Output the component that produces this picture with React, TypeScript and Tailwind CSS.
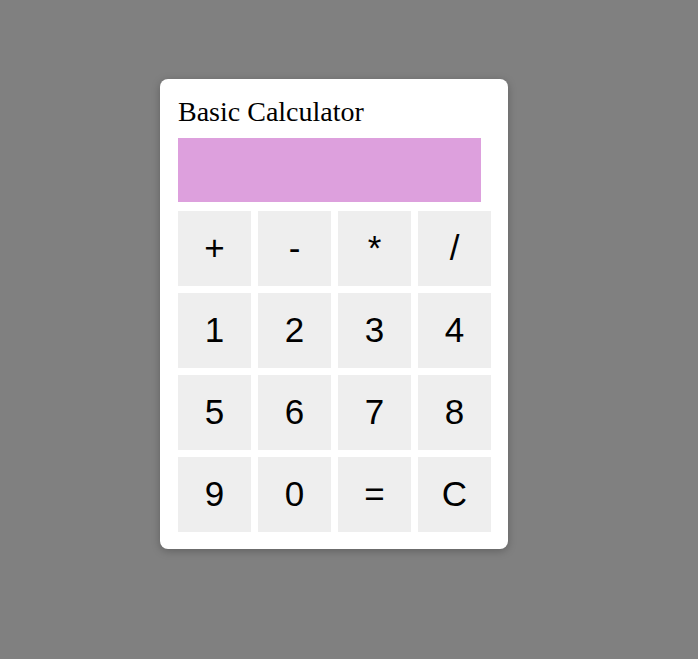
import React from "react";

const keys = ["+", "-", "*", "/", "1", "2", "3", "4", "5", "6", "7", "8", "9", "0", "=", "C"];

export default function App() {
  return (
    <div className="min-h-[659px] w-full bg-[#808080] pl-[160px] pt-[79px]">
      <div className="flex w-[348px] flex-col rounded-lg bg-white pl-[18px] pr-[17px] pt-[18px] pb-[17px] shadow-[0_2px_8px_rgba(0,0,0,0.25)]">
        <div
          className="h-[30px] text-[28px] leading-[30px] text-black"
          style={{ fontFamily: '"Liberation Serif", "Times New Roman", serif' }}
        >
          Basic Calculator
        </div>
        <div className="mt-[11px] h-[64px] w-[303px] bg-[#dda0dd]" />
        <div className="mt-[9px] grid grid-cols-[repeat(4,73px)] auto-rows-[75px] gap-[7px]">
          {keys.map((k) => (
            <button
              key={k}
              className="flex items-center justify-center bg-[#eeeeee] text-[35px] text-black"
              style={{ fontFamily: '"Liberation Sans", Arial, sans-serif' }}
            >
              {k}
            </button>
          ))}
        </div>
      </div>
    </div>
  );
}
